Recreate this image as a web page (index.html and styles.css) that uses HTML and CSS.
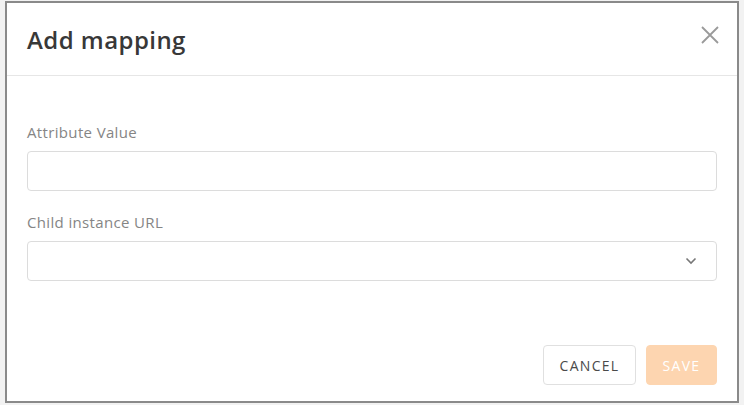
FILE: index.html
```html
<!DOCTYPE html>
<html>
<head>
<meta charset="utf-8">
<link rel="stylesheet" href="styles.css">
</head>
<body>
<div class="stage">
  <div class="dialog">
    <div class="header">
      <h1 class="title">Add mapping</h1>
      <button class="close" aria-label="Close">
        <svg width="18" height="18" viewBox="0 0 18 18"><path d="M1 1L17 17M17 1L1 17" stroke="#9a9a9a" stroke-width="1.8" fill="none"/></svg>
      </button>
    </div>
    <div class="body">
      <label class="label">Attribute Value</label>
      <div class="input"></div>
      <label class="label second">Child instance URL</label>
      <div class="input select">
        <svg width="12" height="8" viewBox="0 0 12 8"><path d="M1.5 1.5L6 6L10.5 1.5" stroke="#777" stroke-width="1.6" fill="none"/></svg>
      </div>
    </div>
    <div class="footer">
      <button class="btn cancel">CANCEL</button>
      <button class="btn save">SAVE</button>
    </div>
  </div>
</div>
</body>
</html>
```
FILE: styles.css
```css
html, body {
  margin: 0;
  padding: 0;
  background: #f2f2f2;
  font-family: "Open Sans", "Liberation Sans", sans-serif;
}
.stage {
  padding: 1px 0 0 5px;
}
.dialog {
  width: 730px;
  height: 398px;
  border: 2px solid #8a8a8a;
  background: #fff;
  display: flex;
  flex-direction: column;
}
.header {
  height: 72px;
  border-bottom: 1px solid #e6e6e6;
  display: flex;
  align-items: center;
  justify-content: space-between;
  padding: 0 20px 0 20px;
}
.title {
  margin: 0;
  font-size: 24px;
  font-weight: 600;
  color: #383838;
  letter-spacing: 0.45px;
}
.close {
  border: 0;
  background: none;
  padding: 0;
  width: 18px;
  height: 18px;
  margin-top: -9px;
  margin-right: -2px;
  display: flex;
}
.body {
  padding: 46px 20px 0 20px;
  display: flex;
  flex-direction: column;
}
.label {
  font-size: 15px;
  line-height: 20px;
  color: #858585;
  margin-bottom: 9px;
  letter-spacing: 0.35px;
}
.label.second {
  margin-top: 21px;
}
.input {
  height: 38px;
  border: 1px solid #dcdcdc;
  border-radius: 4px;
  background: #fff;
}
.select {
  display: flex;
  align-items: center;
  justify-content: flex-end;
  padding-right: 19px;
}
.footer {
  margin-top: auto;
  padding: 0 20px 16px 20px;
  display: flex;
  justify-content: flex-end;
  gap: 10px;
}
.btn {
  height: 40px;
  border-radius: 4px;
  font-family: "Open Sans", "Liberation Sans", sans-serif;
  font-size: 14px;
  font-weight: 400;
  letter-spacing: 1.3px;
  padding: 0;
}
.cancel {
  background: #fff;
  border: 1px solid #e0e0e0;
  color: #4a4a4a;
  width: 93px;
}
.save {
  background: #fdd5b0;
  border: 1px solid #fdd5b0;
  color: #fff;
  width: 71px;
}
```
